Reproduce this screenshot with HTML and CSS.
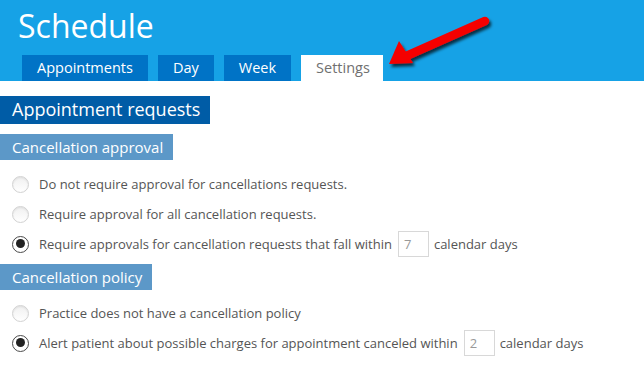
FILE: index.html
```html
<!DOCTYPE html>
<html lang="en">
<head>
    <meta charset="UTF-8">
    <title>Schedule - Settings</title>
    <link rel="stylesheet" href="styles.css">
</head>
<body>
    <div class="header">
        <h1>Schedule</h1>
        <div class="tabs">
            <span class="tab">Appointments</span>
            <span class="tab">Day</span>
            <span class="tab">Week</span>
            <span class="tab active">Settings</span>
        </div>
        <!-- annotation arrow -->
        <svg class="arrow" width="130" height="70" viewBox="0 0 130 70">
            <defs>
                <filter id="shadow" x="-20%" y="-20%" width="140%" height="160%">
                    <feDropShadow dx="2" dy="3" stdDeviation="1.5" flood-color="#000" flood-opacity="0.7"/>
                </filter>
            </defs>
            <g filter="url(#shadow)">
                <line x1="113" y1="10" x2="32" y2="46" stroke="#f50000" stroke-width="8.5" stroke-linecap="round"/>
                <polygon points="17,53 27,30 41,52" fill="#f50000"/>
            </g>
        </svg>
    </div>

    <div class="content">
        <div class="section-title">Appointment requests</div>

        <div class="group-title">Cancellation approval</div>
        <div class="option first"><span class="radio"></span>Do not require approval for cancellations requests.</div>
        <div class="option"><span class="radio"></span>Require approval for all cancellation requests.</div>
        <div class="option"><span class="radio checked"></span>Require approvals for cancellation requests that fall within <span class="num">7</span> calendar days</div>

        <div class="group-title next">Cancellation policy</div>
        <div class="option second"><span class="radio"></span>Practice does not have a cancellation policy</div>
        <div class="option"><span class="radio checked"></span>Alert patient about possible charges for appointment canceled within <span class="num">2</span> calendar days</div>
    </div>
</body>
</html>
```

FILE: styles.css
```css
body { margin: 0; font-family: "Open Sans", "DejaVu Sans", sans-serif; background: #fff; color: #555; }
.header { position: relative; background: #16a2e6; height: 81px; padding-left: 22px; box-sizing: border-box; display: flex; flex-direction: column; }
.header h1 { margin: 0; padding-top: 4px; font-size: 32px; font-weight: 400; color: #fff; line-height: 44px; position: relative; left: -4px; }
.tabs { display: flex; gap: 10px; margin-top: auto; }
.tab { background: #0073c6; color: #fff; font-size: 14.5px; height: 26px; line-height: 26px; padding: 0 15px; }
.tab.active { background: #fff; color: #707070; width: 52px; }
.arrow { position: absolute; left: 372px; top: 11px; }

.content { padding-top: 15px; }
.section-title { display: inline-block; background: #005ca6; color: #fff; font-size: 18px; height: 28px; line-height: 27px; padding: 0 10px 0 12px; }
.group-title { display: table; background: #5c98c8; color: #fff; font-size: 15px; height: 26px; line-height: 26px; padding: 0 10px 0 12px; margin-top: 10px; }
.group-title.next { margin-top: 5px; }
.option { display: flex; align-items: center; font-size: 13px; height: 30px; padding-left: 12px; }
.option.first { margin-top: 9px; }
.option.second { margin-top: 8px; }
.radio { width: 17px; height: 17px; border: 1px solid #d2d2d2; border-radius: 50%; background: linear-gradient(#f0f0f0, #fff); box-shadow: inset 0 1px 2px rgba(0,0,0,0.08); margin-right: 10px; box-sizing: border-box; position: relative; }
.radio.checked { border: 1.5px solid #4a4a4a; background: #fff; box-shadow: none; }
.radio.checked::after { content: ""; position: absolute; left: 2.5px; top: 2.5px; width: 9px; height: 9px; border-radius: 50%; background: #222; }
.num { display: inline-block; width: 31px; height: 26px; border: 1px solid #d8d8d8; box-sizing: border-box; color: #999; line-height: 24px; padding-left: 5px; margin: 0 5px 0 6px; font-size: 13px; }
```
